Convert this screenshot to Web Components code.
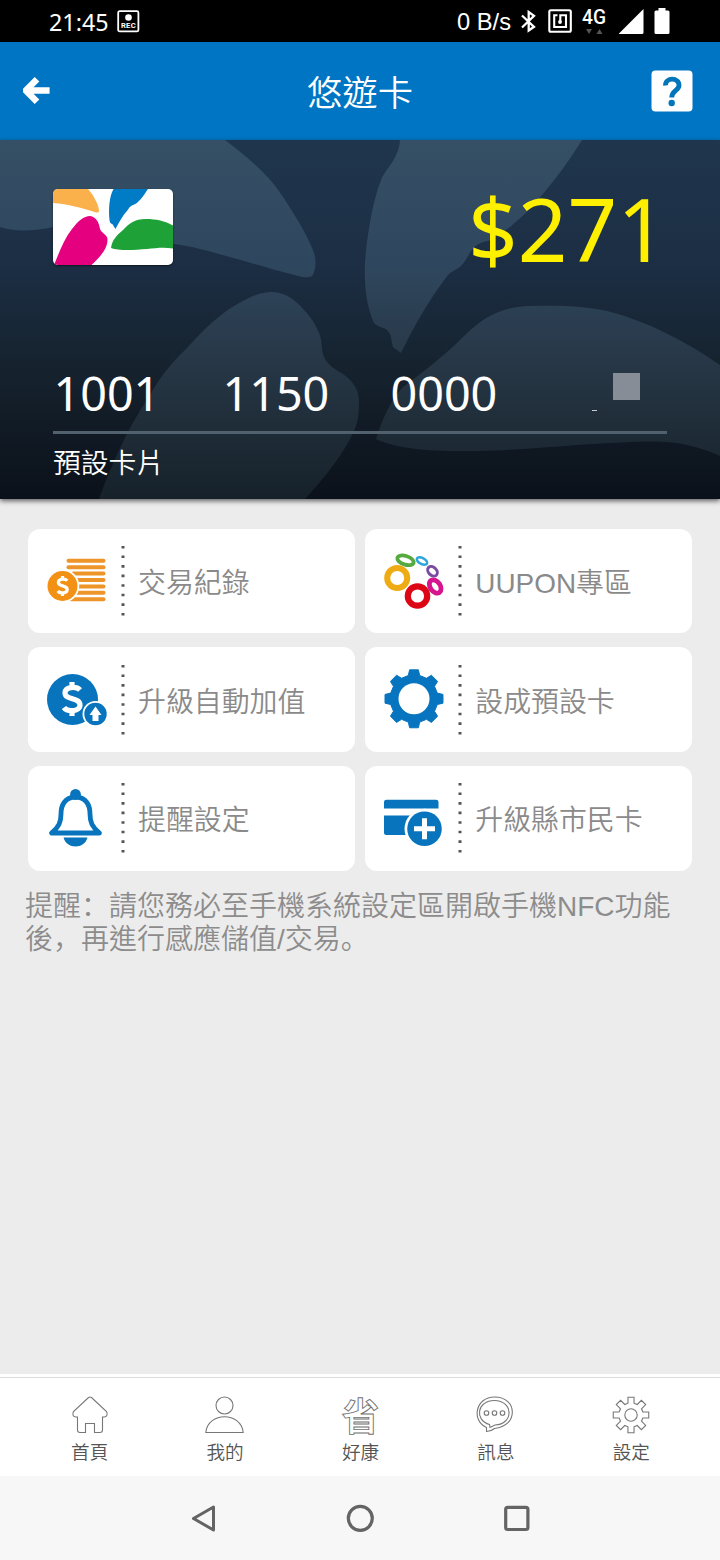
<!DOCTYPE html>
<html lang="zh-Hant">
<head>
<meta charset="utf-8">
<title>悠遊卡</title>
<style>
html,body{margin:0;padding:0}
body{width:720px;height:1560px;overflow:hidden;background:#ececec;font-family:"Noto Sans CJK TC",sans-serif}
</style>
</head>
<body>
<easy-app></easy-app>

<script>
const define = (name, html) => customElements.define(name, class extends HTMLElement {
  constructor() {
    super();
    this.attachShadow({ mode: 'open' }).innerHTML = html;
  }
});

define('status-bar', `
<style>
:host{display:flex;height:42px;background:#000;color:#fff;box-sizing:border-box;padding:0 50px 0 49px;font:24px/44px "Noto Sans",sans-serif;align-items:flex-start}
.time{width:60px;font-size:23.3px;white-space:nowrap}
svg{display:block;flex:none}
.rec{margin:10px 0 0 8px}
.sp{flex:1}
.rate{font:23.700px/45px "Liberation Sans",sans-serif;white-space:nowrap}
.bt{margin:9px 0 0 9px}
.nfc{margin:9px 0 0 11px}
.net{margin:6px 0 0 9px}
.sig{margin:8px 0 0 10px}
.bat{margin:8px 0 0 10px}
</style>
<span class="time">21:45</span>
<svg class="rec" width="23" height="23" viewBox="0 0 23 23"><rect x="1.2" y="1.2" width="20.2" height="20.2" rx="1.5" fill="none" stroke="#fff" stroke-width="1.8"/><circle cx="11.5" cy="7.5" r="3.3" fill="#fff"/><text x="11.4" y="18.4" font-family="Roboto" font-weight="700" font-size="7.6" fill="#fff" text-anchor="middle" letter-spacing=".3">REC</text></svg>
<span class="sp"></span>
<span class="rate">0 B/s</span>
<svg class="bt" width="17" height="25" viewBox="0 0 17 25"><path d="M2 6.500L14 17.800L8.700 21.500V3L14 6.800L2 18.500" fill="none" stroke="#fff" stroke-width="2.300"/></svg>
<svg class="nfc" width="25" height="25" viewBox="0 0 25 25" fill="none" stroke="#fff" stroke-width="2.100"><rect x="1.300" y="1.300" width="21.500" height="21.500" rx="1.500"/><path d="M9.500 6.200H6.200V18H18V6.200H12.300V13" /><circle cx="12" cy="13" r="1.900" fill="#fff" stroke="none"/></svg>
<svg class="net" width="26" height="28" viewBox="0 0 26 28"><text x="0" y="17.500" font-family="Roboto" font-weight="500" font-size="19.500" fill="#fff" textLength="24" lengthAdjust="spacingAndGlyphs">4G</text><path d="M4 23h6l-3 5zM14.500 28h6l-3-5z" fill="#555"/></svg>
<svg class="sig" width="26" height="27" viewBox="0 0 26 27"><path d="M1 25.500L25.500 1V24.500Q25.500 26 24 26H1.500Q.5 26 1 25.500Z" fill="#fff"/></svg>
<svg class="bat" width="16" height="26" viewBox="0 0 16 26"><path d="M4.500 0h7v2.500h2.500q1.500 0 1.500 1.500v20.500q0 1.500-1.500 1.500H2Q.5 26 .5 24.500V4Q.5 2.500 2 2.500h2.500z" fill="#fff"/></svg>
`);

define('title-bar', `
<style>
:host{display:grid;grid-template-columns:100px 1fr 100px;align-items:center;height:98px;background:#0075c3;color:#fff;box-sizing:border-box}
h1{margin:0;text-align:center;font:350 35.300px/60px "Noto Sans CJK TC",sans-serif}
.b{margin-left:23px}
.h{justify-self:end;margin-right:27px}
svg{display:block}
</style>
<svg class="b" width="28" height="28" viewBox="0 0 28 28"><path d="M14 2.300L2.800 13.500L14 24.700M3.500 13.500H26.600" fill="none" stroke="#fff" stroke-width="6.500"/></svg>
<h1><slot></slot></h1>
<svg class="h" width="42" height="42" viewBox="0 0 42 42"><rect x=".5" y=".5" width="41" height="41" rx="4" fill="#fff"/><path d="M14.500 15.500C14 7 28.500 7.200 28 15.500C27.800 20.500 20.700 20.500 20.700 27.500" fill="none" stroke="#0075b9" stroke-width="4.800"/><circle cx="20.700" cy="33" r="3.200" fill="#0075b9"/></svg>
`);

define('card-logo', `
<style>:host{display:block;width:120px;height:76px;border-radius:5px;overflow:hidden;background:#fff;box-shadow:0 1px 2px #0008}svg{display:block}</style>
<svg width="120" height="76" viewBox="0 0 120 76">
<path fill="#fab04b" d="M0 0H35C42 8 46 17 46 22Q46 24 43 23.500C29 19 15 15 0 14Z"/>
<path fill="#007bc6" d="M60.500 0C56 8 55.500 21 56.500 31C57 36 60 34 60.500 37L62.500 40C65 35 70 26 74 22C76 19 77 17 80 16C85 15 91 6 95 0Z"/>
<path fill="#1ea136" d="M58 59C59 51 64 46 70 41C77 34 81 30 93 30C103 30 112 32 120 36.500V59.500C111 58 103 59 94 60C81 61 66 62 58 59Z"/>
<path fill="#e5007f" d="M1 76C6 64 11 50 19 40C25 32 31 27 37 27C43 28 46 33 47 40C48 44 54 45 54.500 50C55 60 46 69 38.500 76Z"/>
</svg>`);

define('balance-card', `
<style>
:host{display:block;position:relative;height:359px;box-sizing:border-box;background:linear-gradient(#1f364d,#1c2e44 35%,#16232f 62%,#0b111a);box-shadow:0 2px 5px #0009;color:#fff}
.bg{position:absolute;inset:0}
.in{position:relative;padding:48.500px 53px 0;display:flex;flex-direction:column}
.top{display:flex;justify-content:space-between;height:174px}
.amt{font:87px/88px "Noto Sans",sans-serif;color:#fff000;margin:-4.500px 0 0 0}
.num{display:grid;grid-template-columns:169px 168px 200px 1fr;height:71px;border-bottom:3px solid #51626e;font:46.700px/60px "Noto Sans",sans-serif;box-sizing:border-box}
.num span{display:block;margin-left:.5px}
.mask{display:flex;align-items:flex-start}
.dash{width:5px;height:1px;background:#c5cbd0;margin:47px 16px 0 2px}
.sq{width:27px;height:27px;background:#868d96;margin-top:10.500px}
.name{font:350 27.800px/40px "Noto Sans CJK TC",sans-serif;margin-top:7px}
</style>
<svg class="bg" width="720" height="359" viewBox="0 0 720 359">
<defs><linearGradient id="p" gradientUnits="userSpaceOnUse" x1="0" y1="0" x2="0" y2="359"><stop offset="0" stop-color="#354f65"/><stop offset=".35" stop-color="#2f475e"/><stop offset=".6" stop-color="#283848"/><stop offset=".8" stop-color="#1f2d38"/><stop offset="1" stop-color="#16212a"/></linearGradient></defs>
<g fill="url(#p)">
<path d="M0 0H225C250 19 269 36 281 54C295 75 308 96 314 113C317 123 315 132 312 136Q309 138 302 137C280 132 252 123 230 117C211 112 193 106 173 104C130 94 90 83 53 87C35 91 14 92 0 87Z"/>
<path d="M99 359C112 323 129 286 147 260C158 240 170 224 187 208C205 188 222 172 241 162C253 155 263 152 272 152C287 153 294 159 304 170C310 176 316 185 319 193C323 202 320 209 325 219C329 226 336 230 343 234C354 242 359 250 359 263C359 276 357 285 353 293C342 316 325 337 305 359Z"/>
<path d="M400 0C399 18 386 29 382 38C373 59 367 96 365 123C364 147 367 168 374 183C379 188 385 187 388 191C392 196 391 201 393 207L401 213C416 182 431 157 448 135C452 131 457 129 460 127C469 118 469 110 477 105C483 101 488 102 494 98L510 87L527 72C548 49 566 26 582 0Z"/>
<path d="M376 299C382 281 390 260 403 247C425 231 442 217 457 203C480 179 498 167 530 166C560 165 586 166 607 171C650 182 688 203 720 225V316C700 307 683 303 666 302C651 301 628 302 610 303C568 305 535 309 493 310.500C443 312 402 311 376 299Z"/>
</g></svg>
<div class="in">
<div class="top"><card-logo></card-logo><div class="amt">$271</div></div>
<div class="num"><span>1001</span><span>1150</span><span>0000</span><div class="mask"><i class="dash"></i><i class="sq"></i></div></div>
<div class="name">預設卡片</div>
</div>`);

define('menu-tile', `
<style>
:host{display:flex;align-items:center;background:#fff;border-radius:12px;height:104.500px;box-sizing:border-box;padding-left:18px}
.i{width:62px;height:62px;flex:none}
.d{flex:none;margin:0 13.500px 0 12.500px;display:block}
.t{font:350 27.900px/40px "Liberation Sans","Noto Sans CJK TC",sans-serif;color:#8a8a8a;white-space:nowrap;margin-top:6px}
</style>
<div class="i"><slot name="icon"></slot></div>
<svg class="d" width="4" height="72" viewBox="0 0 4 72"><path d="M2 .9V72" stroke="#555" stroke-width="3" stroke-dasharray="2.600 6.970"/></svg>
<div class="t"><slot></slot></div>
`);

const gear = (cx, cy, ro, ri, n, a1, a2) => {
  const pts = [];
  for (let k = 0; k < n; k++) {
    const c = k * 2 * Math.PI / n - Math.PI / 2;
    for (const [r, a] of [[ri, -a2], [ro, -a1], [ro, a1], [ri, a2]])
      pts.push((cx + r * Math.cos(c + a)).toFixed(2) + ' ' + (cy + r * Math.sin(c + a)).toFixed(2));
  }
  return 'M' + pts.join('L') + 'Z';
};
const dollar = (x, y, s, w, c = '#fff') => `<path transform="translate(${x} ${y}) scale(${s})" d="M8 -9C5 -12.500 -7 -13 -7 -6C-7 1.500 8 -2 8 6C8 13 -5 13 -8 8.500M0 -17V-10M0 10V17" fill="none" stroke="${c}" stroke-width="${w}"/>`;

const icons = {
  coins: `<g stroke="#ed9529" stroke-width="4" stroke-linecap="round">${[0,1,2,3,4,5,6].map(i => `<path d="M${[22.500,22.500,27,32,33,31,25][i]} ${10.800+i*6.400}H57.500"/>`).join('')}</g><circle cx="16.800" cy="36" r="16.500" fill="#fff"/><circle cx="16.500" cy="36" r="15" fill="#f39114"/>${dollar(16.500,36,.59,5.500)}`,
  rings: `<g fill="none"><ellipse cx="22.500" cy="10.300" rx="8.500" ry="4.300" transform="rotate(18 22.500 10.300)" stroke="#56aa40" stroke-width="3.800"/><ellipse cx="39" cy="11" rx="5.700" ry="3" transform="rotate(28 39 11)" stroke="#2ea6dc" stroke-width="2.500"/><ellipse cx="49.500" cy="21.300" rx="5.500" ry="4" transform="rotate(45 49.500 21.300)" stroke="#7b4ba0" stroke-width="3"/><ellipse cx="52.200" cy="36.500" rx="7.300" ry="5" transform="rotate(55 52.200 36.500)" stroke="#d6148d" stroke-width="4.800"/><circle cx="14.200" cy="28" r="10" stroke="#efab13" stroke-width="6"/><circle cx="34.500" cy="46" r="9.700" stroke="#dc0615" stroke-width="6.200"/></g>`,
  upgrade: `<circle cx="26.500" cy="30.500" r="25.500" fill="#0774bd"/>${dollar(26,30,1,5.200)}<circle cx="49.500" cy="45" r="13" fill="#fff"/><circle cx="49.500" cy="45" r="11.200" fill="#0774bd"/><path d="M49.500 37.500L55.500 46H52.500V52H46.500V46H43.500Z" fill="#fff"/>`,
  gear: `<path fill="#0774bf" stroke="#0774bf" stroke-linejoin="round" d="${gear(31,29.800,29.300,24,8,.15,.24)}"/><circle cx="31" cy="29.800" r="15.500" fill="#fff"/>`,
  bell: `<g fill="none" stroke="#0774bd" stroke-width="4.800" stroke-linejoin="round"><path d="M29.500 10C18.500 10.500 15 18.500 15 27C15 35 13 40 5.500 46H53.500C46 40 44 35 44 27C44 18.500 40.500 10.500 29.500 10Z"/></g><circle cx="29.500" cy="7.400" r="5.400" fill="#0774bd"/><path d="M17.500 50.500H41.500C38.500 62.500 20.500 62.500 17.500 50.500Z" fill="#0774bd"/>`,
  card: `<path d="M1 21.500V15Q1 12.700 3.500 12.700H53Q55.500 12.700 55.500 15V21.500ZM1 28.500H32V48H3.500Q1 48 1 45.500Z" fill="#0774bd"/><circle cx="41.500" cy="41.800" r="20" fill="#fff"/><circle cx="41.500" cy="41.800" r="17.300" fill="#0774bd"/><path d="M31 41.800H52M41.500 31.300V52.300" stroke="#fff" stroke-width="5"/>`,
  home: `<path d="M18.500 1.500Q20 .5 21.500 1.500L36.500 15.500Q38.500 20 34.500 21H32.500V34Q32.500 36.500 30 36.500H24.500V27.500H15.500V36.500H10Q7.500 36.500 7.500 34V21H5.500Q1.500 20 3.500 15.500Z"/>`,
  user: `<circle cx="18.500" cy="9.500" r="8.500"/><path d="M-.2 36.500C2 15.500 35 15.500 37.200 36.500Z"/>`,
  chat: `<path d="M10.500 31.500C-5 24.500 -.5 1 18.500 1C42 1 42.500 30.500 18.500 32.500Q15 35.500 10.500 35.500Z"/><path d="M13.500 28.500C-2 24 1 4.500 18.500 4.500C37 4.500 38.500 28 19 29L14 31.500Z"/><circle cx="10.500" cy="17" r="2.300"/><circle cx="18.500" cy="17" r="2.300"/><circle cx="26.500" cy="17" r="2.300"/>`,
  settings: `<path d="${gear(19,19,18,12.200,8,.17,.25)}"/><circle cx="19" cy="19" r="6.200"/>`
};

customElements.define('app-icon', class extends HTMLElement {
  constructor() {
    super();
    this.attachShadow({ mode: 'open' });
  }
  connectedCallback() {
    const n = this.getAttribute('name');
    const thin = this.hasAttribute('thin');
    const s = thin ? 39 : 62;
    this.shadowRoot.innerHTML = `<style>:host{display:block;width:${s}px;height:${s}px}svg{display:block;overflow:visible}</style>
<svg width="${s}" height="${s}" viewBox="0 0 ${s} ${s}" ${thin ? 'fill="none" stroke="#777" stroke-width="1.1"' : ''}>${icons[n]}</svg>`;
  }
});

define('menu-grid', `<style>:host{display:grid;grid-template-columns:326.500px 326.500px;gap:14.200px 10.800px;padding:29.700px 28px 0}</style><slot></slot>`);

define('nfc-notice', `<style>:host{display:block;margin:19px 0 0 25px;font:350 28px/33px "Liberation Sans","Noto Sans CJK TC",sans-serif;color:#8c8c8c;white-space:nowrap}::slotted(span){font-family:"Liberation Sans","Noto Sans CJK SC",sans-serif}</style><slot></slot>`);

define('tab-item', `
<style>
:host{display:flex;flex-direction:column;align-items:center;color:#555}
.i{height:40px;width:39px}
.t{font:350 18.600px/28px "Noto Sans CJK TC",sans-serif;margin-top:.5px}
</style>
<div class="i"><slot name="icon"></slot></div><div class="t"><slot></slot></div>`);

define('saving-mark', `<style>:host{display:block;font:700 37.500px/35px "Noto Sans CJK TC",sans-serif;color:#fff;-webkit-text-stroke:.9px #707070;width:39px;text-align:center}</style>省`);

define('tab-bar', `
<style>
:host{display:grid;grid-template-columns:repeat(5,135.400px);justify-content:center;box-sizing:border-box;height:102px;background:linear-gradient(#fff 0 3px,#ddd 3px 4px,#fff 4px);padding:22px 0 0 1px}
</style><slot></slot>`);

define('system-nav', `
<style>
:host{display:flex;justify-content:center;height:84px;background:#f7f7f7;align-items:center;gap:126px}
svg{display:block}
</style>
<svg width="30" height="30" viewBox="0 0 30 30" fill="none" stroke="#646464" stroke-width="3" stroke-linejoin="round"><path d="M24.500 4V27L4.500 15.500Z"/></svg>
<svg width="30" height="30" viewBox="0 0 30 30" fill="none" stroke="#646464" stroke-width="3.200"><circle cx="15.300" cy="15.300" r="12"/></svg>
<svg width="30" height="30" viewBox="0 0 30 30" fill="none" stroke="#646464" stroke-width="3.200"><rect x="4.700" y="4.300" width="22.200" height="22.200" rx="2"/></svg>
`);

define('easy-app', `
<style>
:host{display:flex;flex-direction:column;width:720px;height:1560px;background:#ececec}
main{flex:1}
</style>
<status-bar></status-bar>
<title-bar>悠遊卡</title-bar>
<balance-card></balance-card>
<main>
<menu-grid>
<menu-tile><app-icon slot="icon" name="coins"></app-icon>交易紀錄</menu-tile>
<menu-tile><app-icon slot="icon" name="rings"></app-icon>UUPON專區</menu-tile>
<menu-tile><app-icon slot="icon" name="upgrade"></app-icon>升級自動加值</menu-tile>
<menu-tile><app-icon slot="icon" name="gear"></app-icon>設成預設卡</menu-tile>
<menu-tile><app-icon slot="icon" name="bell"></app-icon>提醒設定</menu-tile>
<menu-tile><app-icon slot="icon" name="card"></app-icon>升級縣市民卡</menu-tile>
</menu-grid>
<nfc-notice>提醒<span lang="zh-Hans">：</span>請您務必至手機系統設定區開啟手機NFC功能<br>後<span lang="zh-Hans">，</span>再進行感應儲值/交易<span lang="zh-Hans">。</span></nfc-notice>
</main>
<tab-bar>
<tab-item><app-icon slot="icon" name="home" thin></app-icon>首頁</tab-item>
<tab-item><app-icon slot="icon" name="user" thin></app-icon>我的</tab-item>
<tab-item><saving-mark slot="icon"></saving-mark>好康</tab-item>
<tab-item><app-icon slot="icon" name="chat" thin></app-icon>訊息</tab-item>
<tab-item><app-icon slot="icon" name="settings" thin></app-icon>設定</tab-item>
</tab-bar>
<system-nav></system-nav>
`);
</script>
</body>
</html>
